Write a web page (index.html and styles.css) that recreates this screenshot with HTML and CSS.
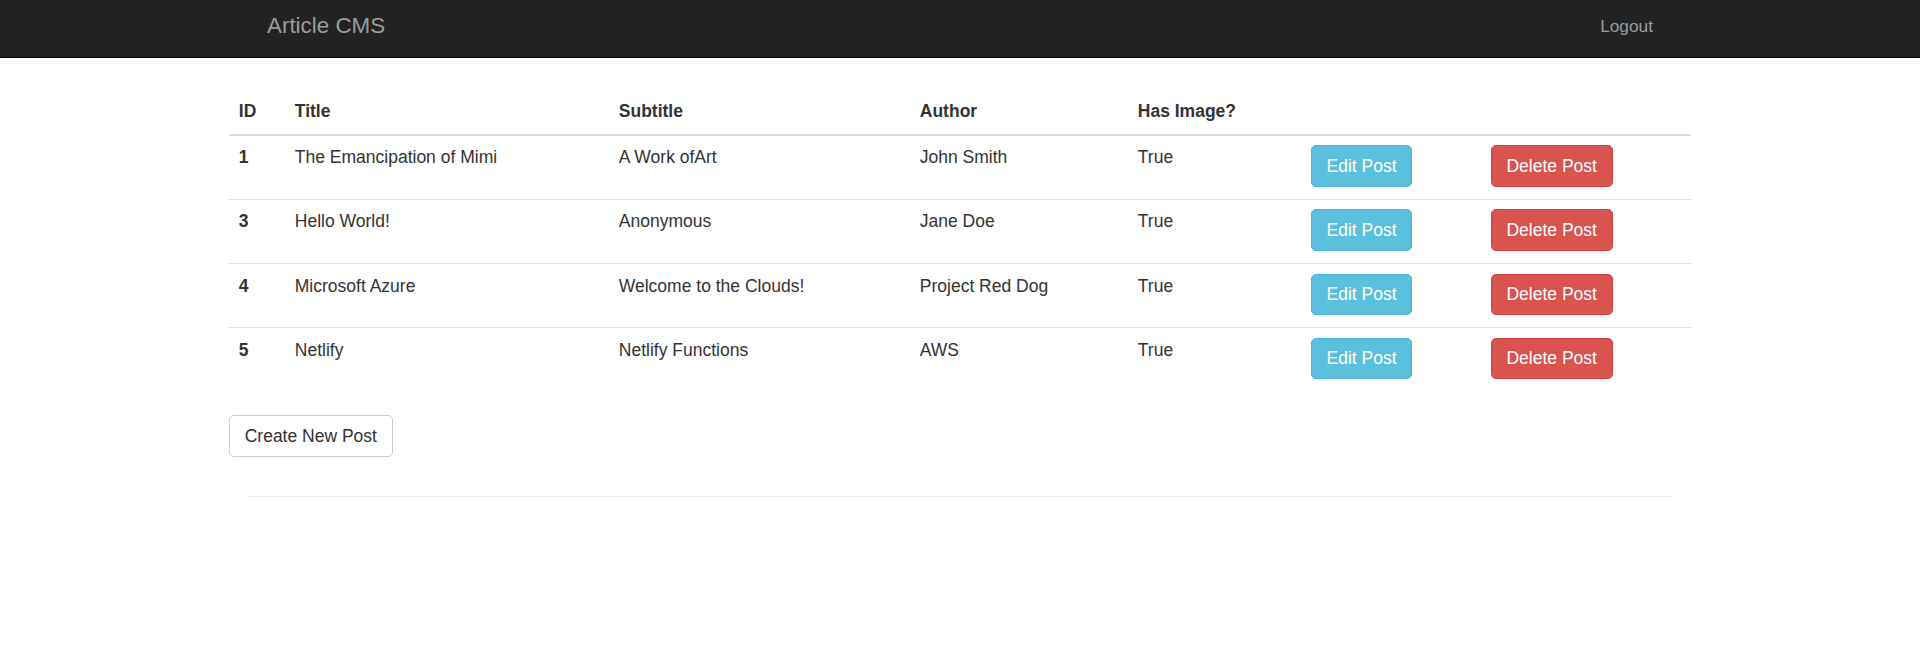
FILE: index.html
```html
<!DOCTYPE html>
<html lang="en">
<head>
<meta charset="utf-8">
<title>Article CMS</title>
<link rel="stylesheet" href="styles.css">
</head>
<body>
<nav class="navbar">
  <div class="navbar-inner">
    <a class="brand" href="#">Article CMS</a>
    <a class="nav-link" href="#">Logout</a>
  </div>
</nav>
<main class="container">
  <table class="posts">
    <colgroup>
      <col class="c-id">
      <col class="c-title">
      <col class="c-subtitle">
      <col class="c-author">
      <col class="c-image">
      <col class="c-edit">
      <col class="c-delete">
    </colgroup>
    <thead>
      <tr>
        <th>ID</th>
        <th>Title</th>
        <th>Subtitle</th>
        <th>Author</th>
        <th>Has Image?</th>
        <th></th>
        <th></th>
      </tr>
    </thead>
    <tbody>
      <tr>
        <td class="id">1</td>
        <td>The Emancipation of Mimi</td>
        <td>A Work ofArt</td>
        <td>John Smith</td>
        <td>True</td>
        <td><a class="btn btn-info" href="#">Edit Post</a></td>
        <td><a class="btn btn-danger" href="#">Delete Post</a></td>
      </tr>
      <tr>
        <td class="id">3</td>
        <td>Hello World!</td>
        <td>Anonymous</td>
        <td>Jane Doe</td>
        <td>True</td>
        <td><a class="btn btn-info" href="#">Edit Post</a></td>
        <td><a class="btn btn-danger" href="#">Delete Post</a></td>
      </tr>
      <tr>
        <td class="id">4</td>
        <td>Microsoft Azure</td>
        <td>Welcome to the Clouds!</td>
        <td>Project Red Dog</td>
        <td>True</td>
        <td><a class="btn btn-info" href="#">Edit Post</a></td>
        <td><a class="btn btn-danger" href="#">Delete Post</a></td>
      </tr>
      <tr>
        <td class="id">5</td>
        <td>Netlify</td>
        <td>Netlify Functions</td>
        <td>AWS</td>
        <td>True</td>
        <td><a class="btn btn-info" href="#">Edit Post</a></td>
        <td><a class="btn btn-danger" href="#">Delete Post</a></td>
      </tr>
    </tbody>
  </table>
  <p class="actions"><a class="btn btn-default" href="#">Create New Post</a></p>
  <hr class="divider">
</main>
</body>
</html>
```
FILE: styles.css
```css
html, body {
  margin: 0;
  padding: 0;
}
body {
  font-family: "Liberation Sans", Arial, Helvetica, sans-serif;
  font-size: 17.5px;
  line-height: 24.49px;
  color: #333;
  background: #fff;
}
a {
  text-decoration: none;
}

/* Navbar */
.navbar {
  background: #222;
  border-bottom: 1px solid #080808;
  height: 57px;
}
.navbar-inner {
  width: 1386px;
  margin: 0 auto;
  display: flex;
  justify-content: space-between;
  align-items: flex-start;
}
.brand {
  color: #9d9d9d;
  font-size: 22.4px;
  line-height: 24.49px;
  padding-top: 13.5px;
}
.nav-link {
  color: #9d9d9d;
  font-size: 17.3px;
  line-height: 24.49px;
  padding-top: 13.5px;
}

/* Main */
.container {
  width: 1462px;
  margin: 0 auto;
  padding-top: 31.5px;
}

.posts {
  width: 100%;
  border-collapse: collapse;
  table-layout: fixed;
  margin-bottom: 24.5px;
}
.c-id { width: 56px; }
.c-title { width: 324px; }
.c-subtitle { width: 301px; }
.c-author { width: 218px; }
.c-image { width: 173px; }
.c-edit { width: 180px; }
.c-delete { width: 210px; }

.posts th {
  text-align: left;
  font-weight: bold;
  padding: 9.8px;
  line-height: 24.49px;
  vertical-align: bottom;
  border-bottom: 2px solid #ddd;
}
.posts td {
  padding: 9.8px 9.8px 11.7px;
  line-height: 24.49px;
  vertical-align: top;
  border-top: 1px solid #ddd;
}
.posts td.id {
  font-weight: bold;
}

/* Buttons */
.btn {
  display: inline-block;
  vertical-align: top;
  font-size: 17.5px;
  line-height: 24.49px;
  padding: 7.57px 14.7px;
  border: 1px solid transparent;
  border-radius: 4.9px;
  white-space: nowrap;
}
.btn-info {
  color: #fff;
  background: #5bc0de;
  border-color: #46b8da;
}
.btn-danger {
  color: #fff;
  background: #d9534f;
  border-color: #d43f3a;
}
.btn-default {
  color: #333;
  background: #fff;
  border-color: #ccc;
}

.actions {
  margin: 0;
}
.divider {
  margin: 39.1px 17.5px 0;
  border: 0;
  border-top: 1px solid #eee;
  height: 0;
}
```
